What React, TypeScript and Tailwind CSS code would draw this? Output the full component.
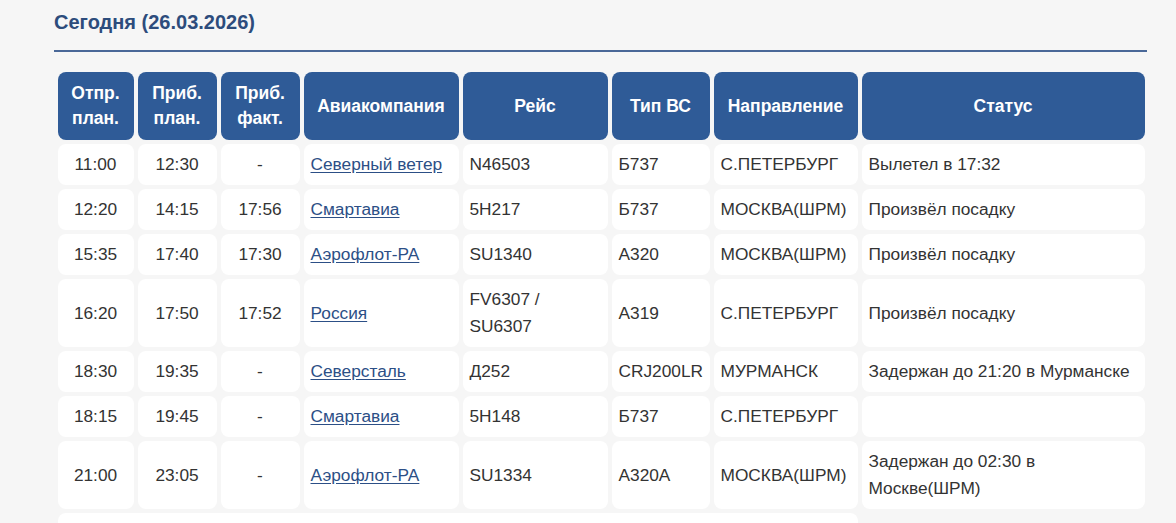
const font = { fontFamily: '"Liberation Sans", Arial, sans-serif' };

type Flight = {
  dep: string;
  arrPlan: string;
  arrFact: string;
  airline: string;
  flight: string[];
  type: string;
  dest: string;
  status: string;
};

const flights: Flight[] = [
  { dep: '11:00', arrPlan: '12:30', arrFact: '-', airline: 'Северный ветер', flight: ['N46503'], type: 'Б737', dest: 'С.ПЕТЕРБУРГ', status: 'Вылетел в 17:32' },
  { dep: '12:20', arrPlan: '14:15', arrFact: '17:56', airline: 'Смартавиа', flight: ['5Н217'], type: 'Б737', dest: 'МОСКВА(ШРМ)', status: 'Произвёл посадку' },
  { dep: '15:35', arrPlan: '17:40', arrFact: '17:30', airline: 'Аэрофлот-РА', flight: ['SU1340'], type: 'A320', dest: 'МОСКВА(ШРМ)', status: 'Произвёл посадку' },
  { dep: '16:20', arrPlan: '17:50', arrFact: '17:52', airline: 'Россия', flight: ['FV6307 /', 'SU6307'], type: 'A319', dest: 'С.ПЕТЕРБУРГ', status: 'Произвёл посадку' },
  { dep: '18:30', arrPlan: '19:35', arrFact: '-', airline: 'Северсталь', flight: ['Д252'], type: 'CRJ200LR', dest: 'МУРМАНСК', status: 'Задержан до 21:20 в Мурманске' },
  { dep: '18:15', arrPlan: '19:45', arrFact: '-', airline: 'Смартавиа', flight: ['5Н148'], type: 'Б737', dest: 'С.ПЕТЕРБУРГ', status: '' },
  { dep: '21:00', arrPlan: '23:05', arrFact: '-', airline: 'Аэрофлот-РА', flight: ['SU1334'], type: 'A320A', dest: 'МОСКВА(ШРМ)', status: 'Задержан до 02:30 в Москве(ШРМ)' },
];

const headers = [
  { label: ['Отпр.', 'план.'], w: 'w-[76px]' },
  { label: ['Приб.', 'план.'], w: 'w-[79px]' },
  { label: ['Приб.', 'факт.'], w: 'w-[79px]' },
  { label: ['Авиакомпания'], w: 'w-[155px]' },
  { label: ['Рейс'], w: 'w-[145px]' },
  { label: ['Тип ВС'], w: 'w-[98px]' },
  { label: ['Направление'], w: 'w-[144px]' },
  { label: ['Статус'], w: 'w-[283px]' },
];

const td = 'bg-white rounded-lg align-middle px-[7px] py-[7px] leading-[27px]';

export default function App() {
  return (
    <div className="min-h-screen bg-[#f6f6f6] text-[#333]" style={font}>
      <div className="pl-[54px] w-[1147px]">
        <h2 className="pt-[9px] text-[20px] font-bold leading-[26px] text-[#2d4c7c]">
          Сегодня (26.03.2026)
        </h2>
        <div className="mt-[15px] h-[2px] bg-[#4a6898]" />
        <table className="mt-[16px] -ml-[0.5px] border-separate border-spacing-1 table-fixed w-[1094px] text-[17.3px]">
          <thead>
            <tr>
              {headers.map((h, i) => (
                <th
                  key={i}
                  className={`${h.w} h-[68px] bg-[#2f5b97] text-white font-bold text-[17.5px] leading-[25px] rounded-lg text-center align-middle px-1`}
                >
                  {h.label.map((l, j) => (
                    <div key={j}>{l}</div>
                  ))}
                </th>
              ))}
            </tr>
          </thead>
          <tbody>
            {flights.map((f, i) => (
              <tr key={i}>
                <td className={`${td} text-center`}>{f.dep}</td>
                <td className={`${td} text-center`}>{f.arrPlan}</td>
                <td className={`${td} text-center`}>{f.arrFact}</td>
                <td className={td}>
                  <a href="#" className="text-[#2c4f86] underline underline-offset-2">
                    {f.airline}
                  </a>
                </td>
                <td className={td}>
                  {f.flight.map((l, j) => (
                    <div key={j}>{l}</div>
                  ))}
                </td>
                <td className={td}>{f.type}</td>
                <td className={td}>{f.dest}</td>
                <td className={td}>{f.status}</td>
              </tr>
            ))}
            <tr>
              <td colSpan={7} className={`${td} h-[41px]`}></td>
            </tr>
          </tbody>
        </table>
      </div>
    </div>
  );
}
